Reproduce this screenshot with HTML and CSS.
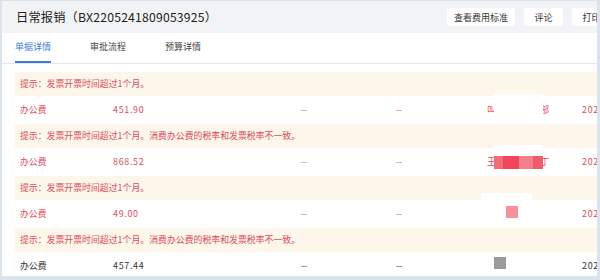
FILE: index.html
```html
<!DOCTYPE html>
<html lang="zh-CN">
<head>
    <meta charset="UTF-8">
    <title>日常报销</title>
    <link rel="stylesheet" href="styles.css">
</head>
<body>
    <div class="sheet">
        <div class="head">
            <h1 class="title">日常报销（BX2205241809053925）</h1>
            <div class="actions">
                <button>查看费用标准</button>
                <button>评论</button>
                <button>打印</button>
            </div>
        </div>

        <div class="tabs">
            <span class="tab active">单据详情</span>
            <span class="tab">审批流程</span>
            <span class="tab">预算详情</span>
        </div>

        <div class="list">
            <div class="hint">提示：发票开票时间超过1个月。</div>
            <div class="row warn">
                <span>办公费</span>
                <span class="num">451.90</span>
                <span>--</span>
                <span>--</span>
                <span class="vendor">
                    <span class="vendor-name">叫某某某某某部</span>
                    <i class="mask mask-a"></i>
                </span>
                <span class="num">2022-05-24 10:21</span>
            </div>

            <div class="hint">提示：发票开票时间超过1个月。消费办公费的税率和发票税率不一致。</div>
            <div class="row warn">
                <span>办公费</span>
                <span class="num">868.52</span>
                <span>--</span>
                <span>--</span>
                <span class="vendor">
                    <span class="vendor-name">王某某某某某丁</span>
                    <i class="mask mask-b"></i>
                    <i class="pixels">
                        <b class="px1"></b><b class="px2"></b><b class="px3"></b><b class="px4"></b>
                    </i>
                </span>
                <span class="num">2022-05-24 10:21</span>
            </div>

            <div class="hint">提示：发票开票时间超过1个月。</div>
            <div class="row warn">
                <span>办公费</span>
                <span class="num">49.00</span>
                <span>--</span>
                <span>--</span>
                <span class="vendor">
                    <i class="mask mask-c"></i>
                    <i class="dot dot-pink"></i>
                </span>
                <span class="num">2022-05-24 10:21</span>
            </div>

            <div class="hint">提示：发票开票时间超过1个月。消费办公费的税率和发票税率不一致。</div>
            <div class="row">
                <span>办公费</span>
                <span class="num">457.44</span>
                <span>--</span>
                <span>--</span>
                <span class="vendor">
                    <i class="dot dot-gray"></i>
                </span>
                <span class="num">2022-05-24 10:21</span>
            </div>
        </div>
    </div>
</body>
</html>
```

FILE: styles.css
```css
body {
    margin: 0;
    background-color: #dbe3ec;
    font-family: "Noto Sans CJK SC", "Noto Sans", sans-serif;
}
.sheet {
    margin: 1px 3px 0 2px;
    height: 275px;
    background: #fff;
    overflow: hidden;
}
.head {
    height: 32px;
    background: #f2f3f5;
    display: flex;
    align-items: center;
    padding-left: 14px;
}
.title {
    flex: 1;
    margin: 0;
    font-size: 12.2px;
    font-weight: normal;
    letter-spacing: 0.2px;
    color: #222;
    white-space: nowrap;
}
.actions {
    display: flex;
    gap: 9px;
    flex-shrink: 0;
    margin-right: -14px;
}
.actions button {
    height: 18px;
    min-width: 39px;
    padding: 0 7px;
    border: none;
    border-radius: 3px;
    background: #fff;
    color: #333;
    font-family: inherit;
    font-size: 9px;
    white-space: nowrap;
}
.tabs {
    display: flex;
    gap: 39px;
    padding-left: 13px;
    border-bottom: 1px solid #e4e7ed;
}
.tab {
    height: 28px;
    line-height: 28px;
    border-bottom: 2px solid transparent;
    font-size: 9px;
    color: #444;
}
.tab.active {
    color: #3a7be0;
    border-bottom-color: #3a7be0;
}
.list {
    margin: 8px 0 0 13px;
    font-size: 8.9px;
}
.hint {
    height: 24px;
    line-height: 24px;
    padding-left: 5px;
    background: #fcf6eb;
    color: #e04c5b;
    white-space: nowrap;
}
.row {
    display: grid;
    grid-template-columns: 93px 188px 95px 86px 100px 130px;
    height: 28px;
    line-height: 28px;
    color: #333;
    white-space: nowrap;
}
.row > span {
    padding-left: 5px;
}
.row .num {
    letter-spacing: 0.7px;
}
.row.warn {
    color: #e04c5b;
}
.vendor {
    position: relative;
}
.vendor .vendor-name {
    padding-left: 5px;
}
.mask {
    position: absolute;
    background: #fff;
}
.mask-a {
    left: 17px;
    top: -2px;
    width: 49px;
    height: 28px;
}
.mask-b {
    left: 17px;
    top: -3px;
    width: 49px;
    height: 11px;
}
.mask-c {
    left: 4px;
    top: -7px;
    width: 51px;
    height: 7px;
}
.pixels {
    position: absolute;
    left: 17px;
    top: 8px;
    height: 13px;
    display: flex;
}
.pixels b {
    height: 13px;
}
.px1 { width: 9px; background: #f36d79; }
.px2 { width: 16px; background: #f04657; }
.px3 { width: 14px; background: #f4808b; }
.px4 { width: 10px; background: #f05c6a; }
.dot {
    position: absolute;
    width: 12px;
    height: 12px;
}
.dot-pink {
    left: 29px;
    top: 6px;
    background: #f4919b;
}
.dot-gray {
    left: 17px;
    top: 5px;
    background: #9b9b9b;
}
```
